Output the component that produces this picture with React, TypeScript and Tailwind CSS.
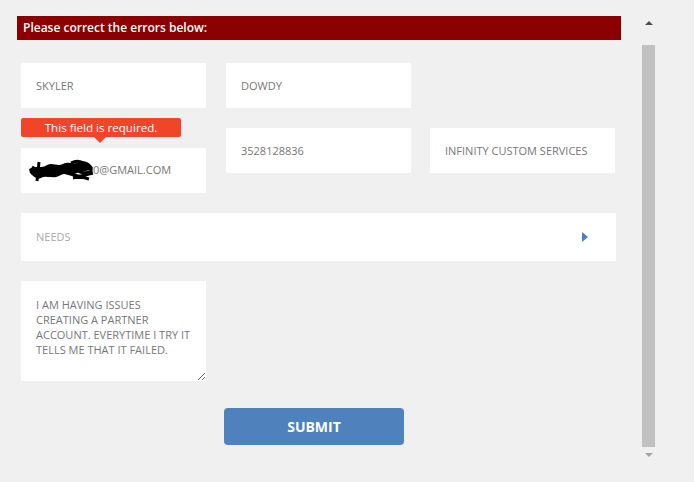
import React from 'react';

const field =
  'h-[45px] w-[185px] bg-white pl-[15px] text-[11px] text-[#777] uppercase outline-none border-0';

const Scribble: React.FC = () => (
  <svg className="absolute left-[6px] top-[11px]" width="70" height="24" viewBox="0 0 70 24">
    <path
      d="M2 10 C10 6 14 10 20 6 C26 3 30 8 36 5 C42 2 46 6 52 3 C58 1 63 4 66 9 C62 13 56 11 50 14 C44 17 38 13 32 17 C26 20 20 16 14 19 C10 21 6 17 3 14 Z"
      fill="#000"
    />
    <path d="M5 8 L22 17 M12 3 L10 22 M44 4 C50 1 57 2 59 8 M55 5 C61 5 65 8 64 12 C59 15 52 14 50 10 M36 13 L62 20 M46 19 L66 14" stroke="#000" strokeWidth="3" fill="none" />
  </svg>
);

const App: React.FC = () => {
  return (
    <div className="flex h-[482px] w-[694px] bg-[#f0f0f0] font-['Open_Sans',sans-serif] overflow-hidden">
      <div className="w-[642px] pl-[17px] pt-[16px]">
        {/* Error banner */}
        <div className="flex h-[24px] w-[604px] items-center bg-[#8b0000] pl-[6px] text-[12px] font-semibold text-white">
          Please correct the errors below:
        </div>

        <div className="flex flex-col pl-[4px] pt-[23px]">
          {/* Row 1 */}
          <div className="flex gap-[20px]">
            <input className={field} defaultValue="SKYLER" readOnly />
            <input className={field} defaultValue="DOWDY" readOnly />
          </div>

          {/* Row 2 */}
          <div className="mt-[20px] flex items-start gap-[20px]">
            <div className="mt-[-10px] flex flex-col">
              <div className="relative flex h-[19px] w-[160px] items-center justify-center rounded-[2px] bg-[#f1452a] text-[11.6px] text-white">
                This field is required.
                <span className="absolute left-[73px] top-[19px] h-0 w-0 border-x-[6px] border-t-[6px] border-x-transparent border-t-[#f1452a]" />
              </div>
              <div className={`${field} relative mt-[11px] flex items-center`}>
                <Scribble />
                <span className="pl-[57px]">0@GMAIL.COM</span>
              </div>
            </div>
            <input className={field} defaultValue="3528128836" readOnly />
            <input className={`${field} ml-[-1px]`} defaultValue="INFINITY CUSTOM SERVICES" readOnly />
          </div>

          {/* Needs select */}
          <div className="mt-[20px] flex h-[48px] w-[595px] items-center justify-between bg-white pl-[15px] pr-[28px]">
            <span className="text-[11px] text-[#aaa]">NEEDS</span>
            <span className="h-0 w-0 border-y-[5px] border-l-[6px] border-y-transparent border-l-[#4a7fc1]" />
          </div>

          {/* Message */}
          <textarea
            className="mt-[20px] h-[100px] w-[185px] bg-white pl-[15px] pr-[12px] pt-[16px] text-[11px] leading-[15px] text-[#777] outline-none"
            defaultValue="I AM HAVING ISSUES CREATING A PARTNER ACCOUNT. EVERYTIME I TRY IT TELLS ME THAT IT FAILED."
          />

          {/* Submit */}
          <div className="mt-[27px] pl-[203px]">
            <button className="h-[37px] w-[180px] rounded-[4px] bg-[#4f81bd] text-[14px] font-bold text-white">
              SUBMIT
            </button>
          </div>
        </div>
      </div>

      {/* Scrollbar */}
      <div className="flex w-[13px] flex-col items-center">
        <div className="mt-[21px] h-0 w-0 border-x-[4px] border-b-[4px] border-x-transparent border-b-[#505050]" />
        <div className="mt-[20px] h-[402px] w-[13px] bg-[#c1c1c1]" />
        <div className="mt-[6px] h-0 w-0 border-x-[4px] border-t-[4px] border-x-transparent border-t-[#a3a3a3]" />
      </div>
    </div>
  );
};

export default App;
